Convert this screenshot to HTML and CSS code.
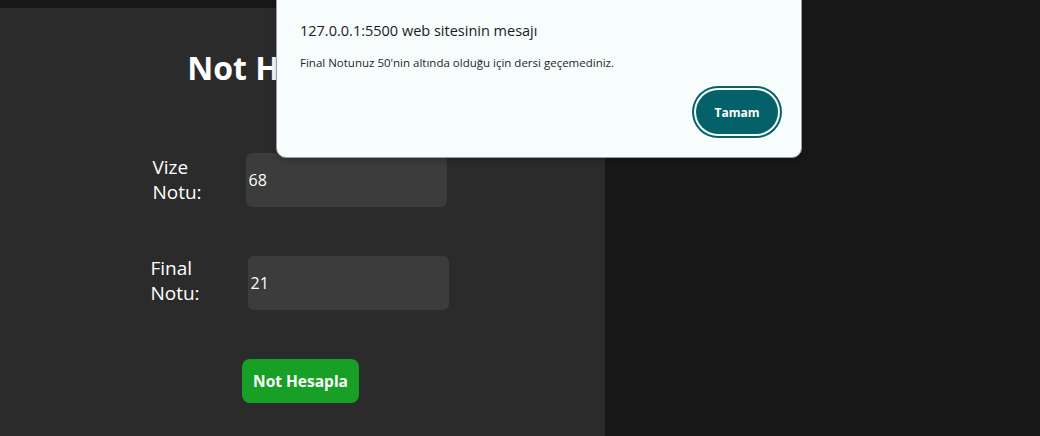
FILE: index.html
```html
<!DOCTYPE html>
<html lang="tr">
<head>
<meta charset="utf-8">
<title>Not Hesaplama</title>
<link rel="stylesheet" href="styles.css">
</head>
<body>
  <main class="panel">
    <h1 class="title">Not Hesaplama</h1>
    <form class="form">
      <div class="row row-vize">
        <label class="label" for="vize">Vize Notu:</label>
        <input class="input" id="vize" type="text" value="68">
      </div>
      <div class="row row-final">
        <label class="label" for="final">Final Notu:</label>
        <input class="input" id="final" type="text" value="21">
      </div>
      <div class="actions">
        <button type="button" class="calc">Not Hesapla</button>
      </div>
    </form>
  </main>

  <div class="alert" role="alertdialog">
    <div class="alert-title">127.0.0.1:5500 web sitesinin mesajı</div>
    <div class="alert-msg">Final Notunuz 50'nin altında olduğu için dersi geçemediniz.</div>
    <div class="alert-actions">
      <button type="button" class="ok">Tamam</button>
    </div>
  </div>
</body>
</html>
```

FILE: styles.css
```css
* { box-sizing: border-box; }

html, body {
  margin: 0;
  height: 100%;
}

body {
  background: #181818;
  padding-top: 8px;
  font-family: "Open Sans", "Noto Sans", sans-serif;
  overflow: hidden;
}

.panel {
  width: 605px;
  height: 100%;
  background: #2b2b2b;
  padding-top: 40px;
}

.title {
  margin: 0;
  padding-left: 16px;
  text-align: center;
  color: #ffffff;
  font-size: 32px;
  font-weight: 700;
  line-height: 40px;
}

.form {
  display: flex;
  flex-direction: column;
  align-items: center;
  margin-top: 65px;
}

.row {
  display: flex;
  align-items: center;
  gap: 44px;
  height: 54px;
  margin-left: -6px;
}

.row-final {
  margin-top: 49px;
  gap: 48px;
}

.row-final .label {
  margin-top: -4px;
}

.label {
  width: min-content;
  color: #ffffff;
  font-size: 19px;
  line-height: 25px;
}

.input {
  width: 201px;
  height: 54px;
  border: none;
  border-radius: 6px;
  background: #3c3c3c;
  color: #ffffff;
  font-family: inherit;
  font-size: 16px;
  padding: 0 3px;
  outline: none;
}

.actions {
  margin-top: 49px;
  margin-left: -4px;
}

.calc {
  height: 44px;
  padding: 0 11px;
  border: none;
  border-radius: 8px;
  background: #17a025;
  color: #ffffff;
  font-family: inherit;
  font-size: 15.5px;
  font-weight: 700;
}

.alert {
  position: absolute;
  left: 276px;
  top: -12px;
  width: 526px;
  height: 170px;
  background: #f7fdfd;
  border: 1px solid #9aa0a3;
  border-radius: 10px;
  padding: 32px 23px 0 23px;
  box-shadow: 0 2px 6px rgba(0,0,0,0.25);
}

.alert-title {
  color: #1a1a1a;
  font-size: 14.5px;
  font-weight: 500;
  line-height: 20px;
}

.alert-msg {
  margin-top: 14px;
  color: #1f1f1f;
  font-size: 11.5px;
  line-height: 16px;
}

.alert-actions {
  display: flex;
  justify-content: flex-end;
  margin-top: 17px;
  margin-right: -2px;
}

.ok {
  width: 82px;
  height: 44px;
  border: none;
  border-radius: 22px;
  background: #04616a;
  color: #ffffff;
  font-family: inherit;
  font-size: 12px;
  font-weight: 700;
  box-shadow: 0 0 0 2px #f7fdfd, 0 0 0 4px #04616a;
  margin: 2px;
}
```
